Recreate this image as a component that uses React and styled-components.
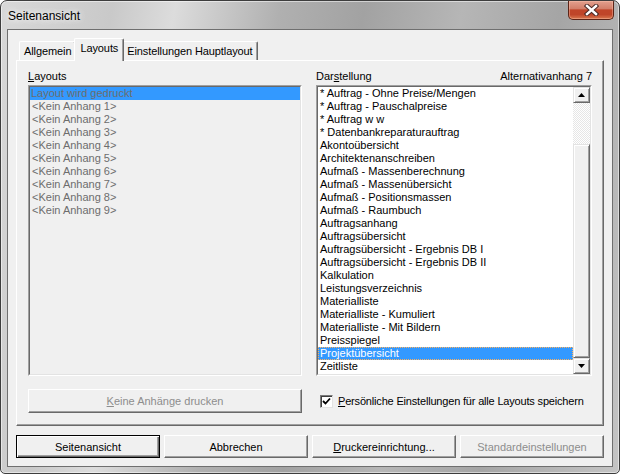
import styled, { createGlobalStyle } from "styled-components";

const GlobalStyle = createGlobalStyle`
  html, body {
    margin: 0;
    padding: 0;
    background: #ffffff;
  }
  body {
    font-family: "Liberation Sans", Arial, sans-serif;
    font-size: 11px;
    color: #000;
  }
`;

const Window = styled.div`
  width: 620px;
  height: 474px;
  box-sizing: border-box;
  border: 1px solid #3d3d3d;
  border-radius: 7px 7px 5px 5px;
  background: linear-gradient(100deg, #d8d8d8 0%, #c9c9c9 16%, #dcdcdc 25%, #b0b0b0 40%, #a2a2a2 52%, #b6b6b6 66%, #a5a5a5 80%, #c4c4c4 100%);
  box-shadow: inset 0 0 0 1px rgba(255, 255, 255, 0.5);
  display: flex;
  flex-direction: column;
  padding: 0 6px 6px;
  overflow: hidden;
`;

const TitleBar = styled.div`
  height: 28px;
  display: flex;
  justify-content: space-between;
  align-items: center;
  padding-left: 1px;
`;

const Title = styled.span`
  font-size: 12px;
  color: #000;
  text-shadow: 0 0 6px rgba(255, 255, 255, 0.9), 0 0 10px rgba(255, 255, 255, 0.7);
  margin-top: 2px;
`;

const CloseButton = styled.div`
  align-self: flex-start;
  width: 46px;
  height: 19px;
  margin-right: -1px;
  box-sizing: border-box;
  border: 1px solid #5b2417;
  border-top: none;
  border-radius: 0 0 5px 5px;
  background: linear-gradient(#e2a08e 0%, #d27f6a 42%, #c04529 50%, #bf4529 75%, #d8784f 100%);
  box-shadow: inset 0 0 0 1px rgba(255, 200, 180, 0.4);
  display: flex;
  align-items: center;
  justify-content: center;
`;

const Client = styled.div`
  flex: 1;
  border: 1px solid #6f6f6f;
  background: #f0f0f0;
  padding: 8px;
  display: flex;
  flex-direction: column;
`;

const TabStrip = styled.div`
  height: 22px;
  display: flex;
  align-items: flex-end;
  padding-left: 3px;
`;

const Tab = styled.div`
  box-sizing: border-box;
  height: ${(p) => (p.$active ? "23px" : "19px")};
  margin: ${(p) => (p.$active ? "0 -2px -1px" : "0")};
  padding: ${(p) => (p.$active ? "3px 5px 0 5px" : "3px 4px 0 4px")};
  position: relative;
  z-index: ${(p) => (p.$active ? 1 : 0)};
  background: #f0f0f0;
  border-top: 1px solid #ffffff;
  border-left: 1px solid #ffffff;
  border-right: 1px solid #696969;
  box-shadow: inset -1px 0 0 #a0a0a0;
  border-radius: 2px 2px 0 0;
  line-height: 13px;
  white-space: nowrap;
  letter-spacing: -0.1px;
`;

const Panel = styled.div`
  height: 366px;
  box-sizing: border-box;
  border-top: 1px solid #ffffff;
  border-left: 1px solid #ffffff;
  border-right: 1px solid #696969;
  border-bottom: 1px solid #696969;
  box-shadow: inset -1px -1px 0 #a0a0a0;
  padding: 8px 11px 12px 11px;
  display: grid;
  grid-template-columns: 274px 276px;
  column-gap: 14px;
`;

const Column = styled.div`
  display: flex;
  flex-direction: column;
`;

const LabelRow = styled.div`
  height: 14px;
  line-height: 14px;
  margin-bottom: 2px;
  display: flex;
  justify-content: space-between;
  white-space: nowrap;
`;

const ListFrame = styled.div`
  height: 291px;
  box-sizing: border-box;
  border: 1px solid;
  border-color: #a0a0a0 #ffffff #ffffff #a0a0a0;
  display: flex;
`;

const ListBox = styled.div`
  flex: 1;
  display: flex;
  border: 1px solid;
  border-color: #696969 #e3e3e3 #e3e3e3 #696969;
  background: ${(p) => (p.$disabled ? "#f0f0f0" : "#ffffff")};
  overflow: hidden;
`;

const Items = styled.div`
  flex: 1;
  min-width: 0;
  display: flex;
  flex-direction: column;
`;

const Row = styled.div`
  height: 13px;
  line-height: 13px;
  padding-left: ${(p) => (p.$indent ? "2px" : "1px")};
  white-space: nowrap;
  color: ${(p) => (p.$disabled ? "#6d6d6d" : p.$selected ? "#ffffff" : "#000000")};
  background: ${(p) => (p.$selected ? "#3399ff" : "transparent")};
  outline: ${(p) => (p.$focus ? "1px dotted #ffb15c" : "none")};
  outline-offset: -1px;
`;

const ScrollBar = styled.div`
  width: 17px;
  flex-shrink: 0;
  display: flex;
  flex-direction: column;
  background: repeating-conic-gradient(#ffffff 0 25%, #e6e6e6 0 50%) 0 0 / 2px 2px;
`;

const Raised = styled.div`
  box-sizing: border-box;
  background: #f0f0f0;
  border: 1px solid;
  border-color: #e3e3e3 #696969 #696969 #e3e3e3;
  box-shadow: inset 1px 1px 0 #ffffff, inset -1px -1px 0 #a0a0a0;
`;

const ScrollButton = styled(Raised)`
  height: 16px;
  display: flex;
  align-items: center;
  justify-content: center;
`;

const TrackGap = styled.div`
  height: 41px;
`;

const Thumb = styled(Raised)`
  flex: 1;
`;

const PushButton = styled.div`
  box-sizing: border-box;
  height: ${(p) => p.$h || "23px"};
  background: #f0f0f0;
  border: 1px solid;
  border-color: ${(p) => (p.$default ? "#000000" : "#ffffff #696969 #696969 #ffffff")};
  box-shadow: ${(p) =>
    p.$default
      ? "inset 1px 1px 0 #ffffff, inset -1px -1px 0 #696969, inset -2px -2px 0 #a0a0a0"
      : "inset -1px -1px 0 #a0a0a0"};
  display: flex;
  align-items: center;
  justify-content: center;
  color: ${(p) => (p.$disabled ? "#8d8d8d" : "#000000")};
  white-space: nowrap;
`;

const LowerButton = styled(PushButton)`
  margin-top: 13px;
`;

const CheckRow = styled.div`
  height: 24px;
  margin-top: 13px;
  padding-left: 4px;
  display: flex;
  align-items: center;
  gap: 5px;
  white-space: nowrap;
  letter-spacing: -0.18px;
`;

const CheckBox = styled.div`
  width: 13px;
  height: 13px;
  box-sizing: border-box;
  border: 1px solid;
  border-color: #7a7a7a #e3e3e3 #e3e3e3 #7a7a7a;
  box-shadow: inset 1px 1px 0 #404040;
  background: #ffffff;
  display: flex;
  align-items: center;
  justify-content: center;
`;

const ButtonRow = styled.div`
  margin-top: 9px;
  display: grid;
  grid-template-columns: repeat(4, 144px);
  column-gap: 4px;
`;

const Arrow = ({ down }) => (
  <svg width="7" height="4" viewBox="0 0 7 4">
    <polygon points={down ? "0,0 7,0 3.5,4" : "0,4 7,4 3.5,0"} fill="#000" />
  </svg>
);

const CloseGlyph = () => (
  <svg width="15" height="12" viewBox="0 0 15 12">
    <g strokeLinecap="square">
      <path d="M3 2 L12 10 M12 2 L3 10" stroke="#4a2a26" strokeWidth="4.4" />
      <path d="M3 2 L12 10 M12 2 L3 10" stroke="#ffffff" strokeWidth="2.4" />
    </g>
  </svg>
);

const CheckMark = () => (
  <svg width="9" height="9" viewBox="0 0 9 9">
    <path d="M1 4 L3.5 6.5 L8 1.5" stroke="#000" strokeWidth="1.8" fill="none" />
  </svg>
);

const attachments = [1, 2, 3, 4, 5, 6, 7, 8, 9].map((n) => `<Kein Anhang ${n}>`);

const layouts = [
  "* Auftrag - Ohne Preise/Mengen",
  "* Auftrag - Pauschalpreise",
  "* Auftrag w w",
  "* Datenbankreparaturauftrag",
  "Akontoübersicht",
  "Architektenanschreiben",
  "Aufmaß - Massenberechnung",
  "Aufmaß - Massenübersicht",
  "Aufmaß - Positionsmassen",
  "Aufmaß - Raumbuch",
  "Auftragsanhang",
  "Auftragsübersicht",
  "Auftragsübersicht - Ergebnis DB I",
  "Auftragsübersicht - Ergebnis DB II",
  "Kalkulation",
  "Leistungsverzeichnis",
  "Materialliste",
  "Materialliste - Kumuliert",
  "Materialliste - Mit Bildern",
  "Preisspiegel",
  "Projektübersicht",
  "Zeitliste",
];

export default function App() {
  return (
    <>
      <GlobalStyle />
      <Window>
        <TitleBar>
          <Title>Seitenansicht</Title>
          <CloseButton>
            <CloseGlyph />
          </CloseButton>
        </TitleBar>
        <Client>
          <TabStrip>
            <Tab>Allgemein</Tab>
            <Tab $active>Layouts</Tab>
            <Tab>Einstellungen Hauptlayout</Tab>
          </TabStrip>
          <Panel>
            <Column>
              <LabelRow>
                <span>
                  <u>L</u>ayouts
                </span>
              </LabelRow>
              <ListFrame>
                <ListBox $disabled>
                  <Items>
                    <Row $disabled $selected>
                      Layout wird gedruckt
                    </Row>
                    {attachments.map((a) => (
                      <Row key={a} $disabled $indent>
                        {a}
                      </Row>
                    ))}
                  </Items>
                </ListBox>
              </ListFrame>
              <LowerButton $disabled $h="24px">
                <span>
                  <u>K</u>eine Anhänge drucken
                </span>
              </LowerButton>
            </Column>
            <Column>
              <LabelRow>
                <span>
                  Dar<u>s</u>tellung
                </span>
                <span>Alternativanhang 7</span>
              </LabelRow>
              <ListFrame>
                <ListBox>
                  <Items>
                    {layouts.map((l) => (
                      <Row
                        key={l}
                        $indent
                        $selected={l === "Projektübersicht"}
                        $focus={l === "Projektübersicht"}
                      >
                        {l}
                      </Row>
                    ))}
                  </Items>
                  <ScrollBar>
                    <ScrollButton>
                      <Arrow />
                    </ScrollButton>
                    <TrackGap />
                    <Thumb />
                    <ScrollButton>
                      <Arrow down />
                    </ScrollButton>
                  </ScrollBar>
                </ListBox>
              </ListFrame>
              <CheckRow>
                <CheckBox>
                  <CheckMark />
                </CheckBox>
                <span>
                  <u>P</u>ersönliche Einstellungen für alle Layouts speichern
                </span>
              </CheckRow>
            </Column>
          </Panel>
          <ButtonRow>
            <PushButton $default>Seitenansicht</PushButton>
            <PushButton>Abbrechen</PushButton>
            <PushButton>
              <span>
                <u>D</u>ruckereinrichtung...
              </span>
            </PushButton>
            <PushButton $disabled>Standardeinstellungen</PushButton>
          </ButtonRow>
        </Client>
      </Window>
    </>
  );
}
